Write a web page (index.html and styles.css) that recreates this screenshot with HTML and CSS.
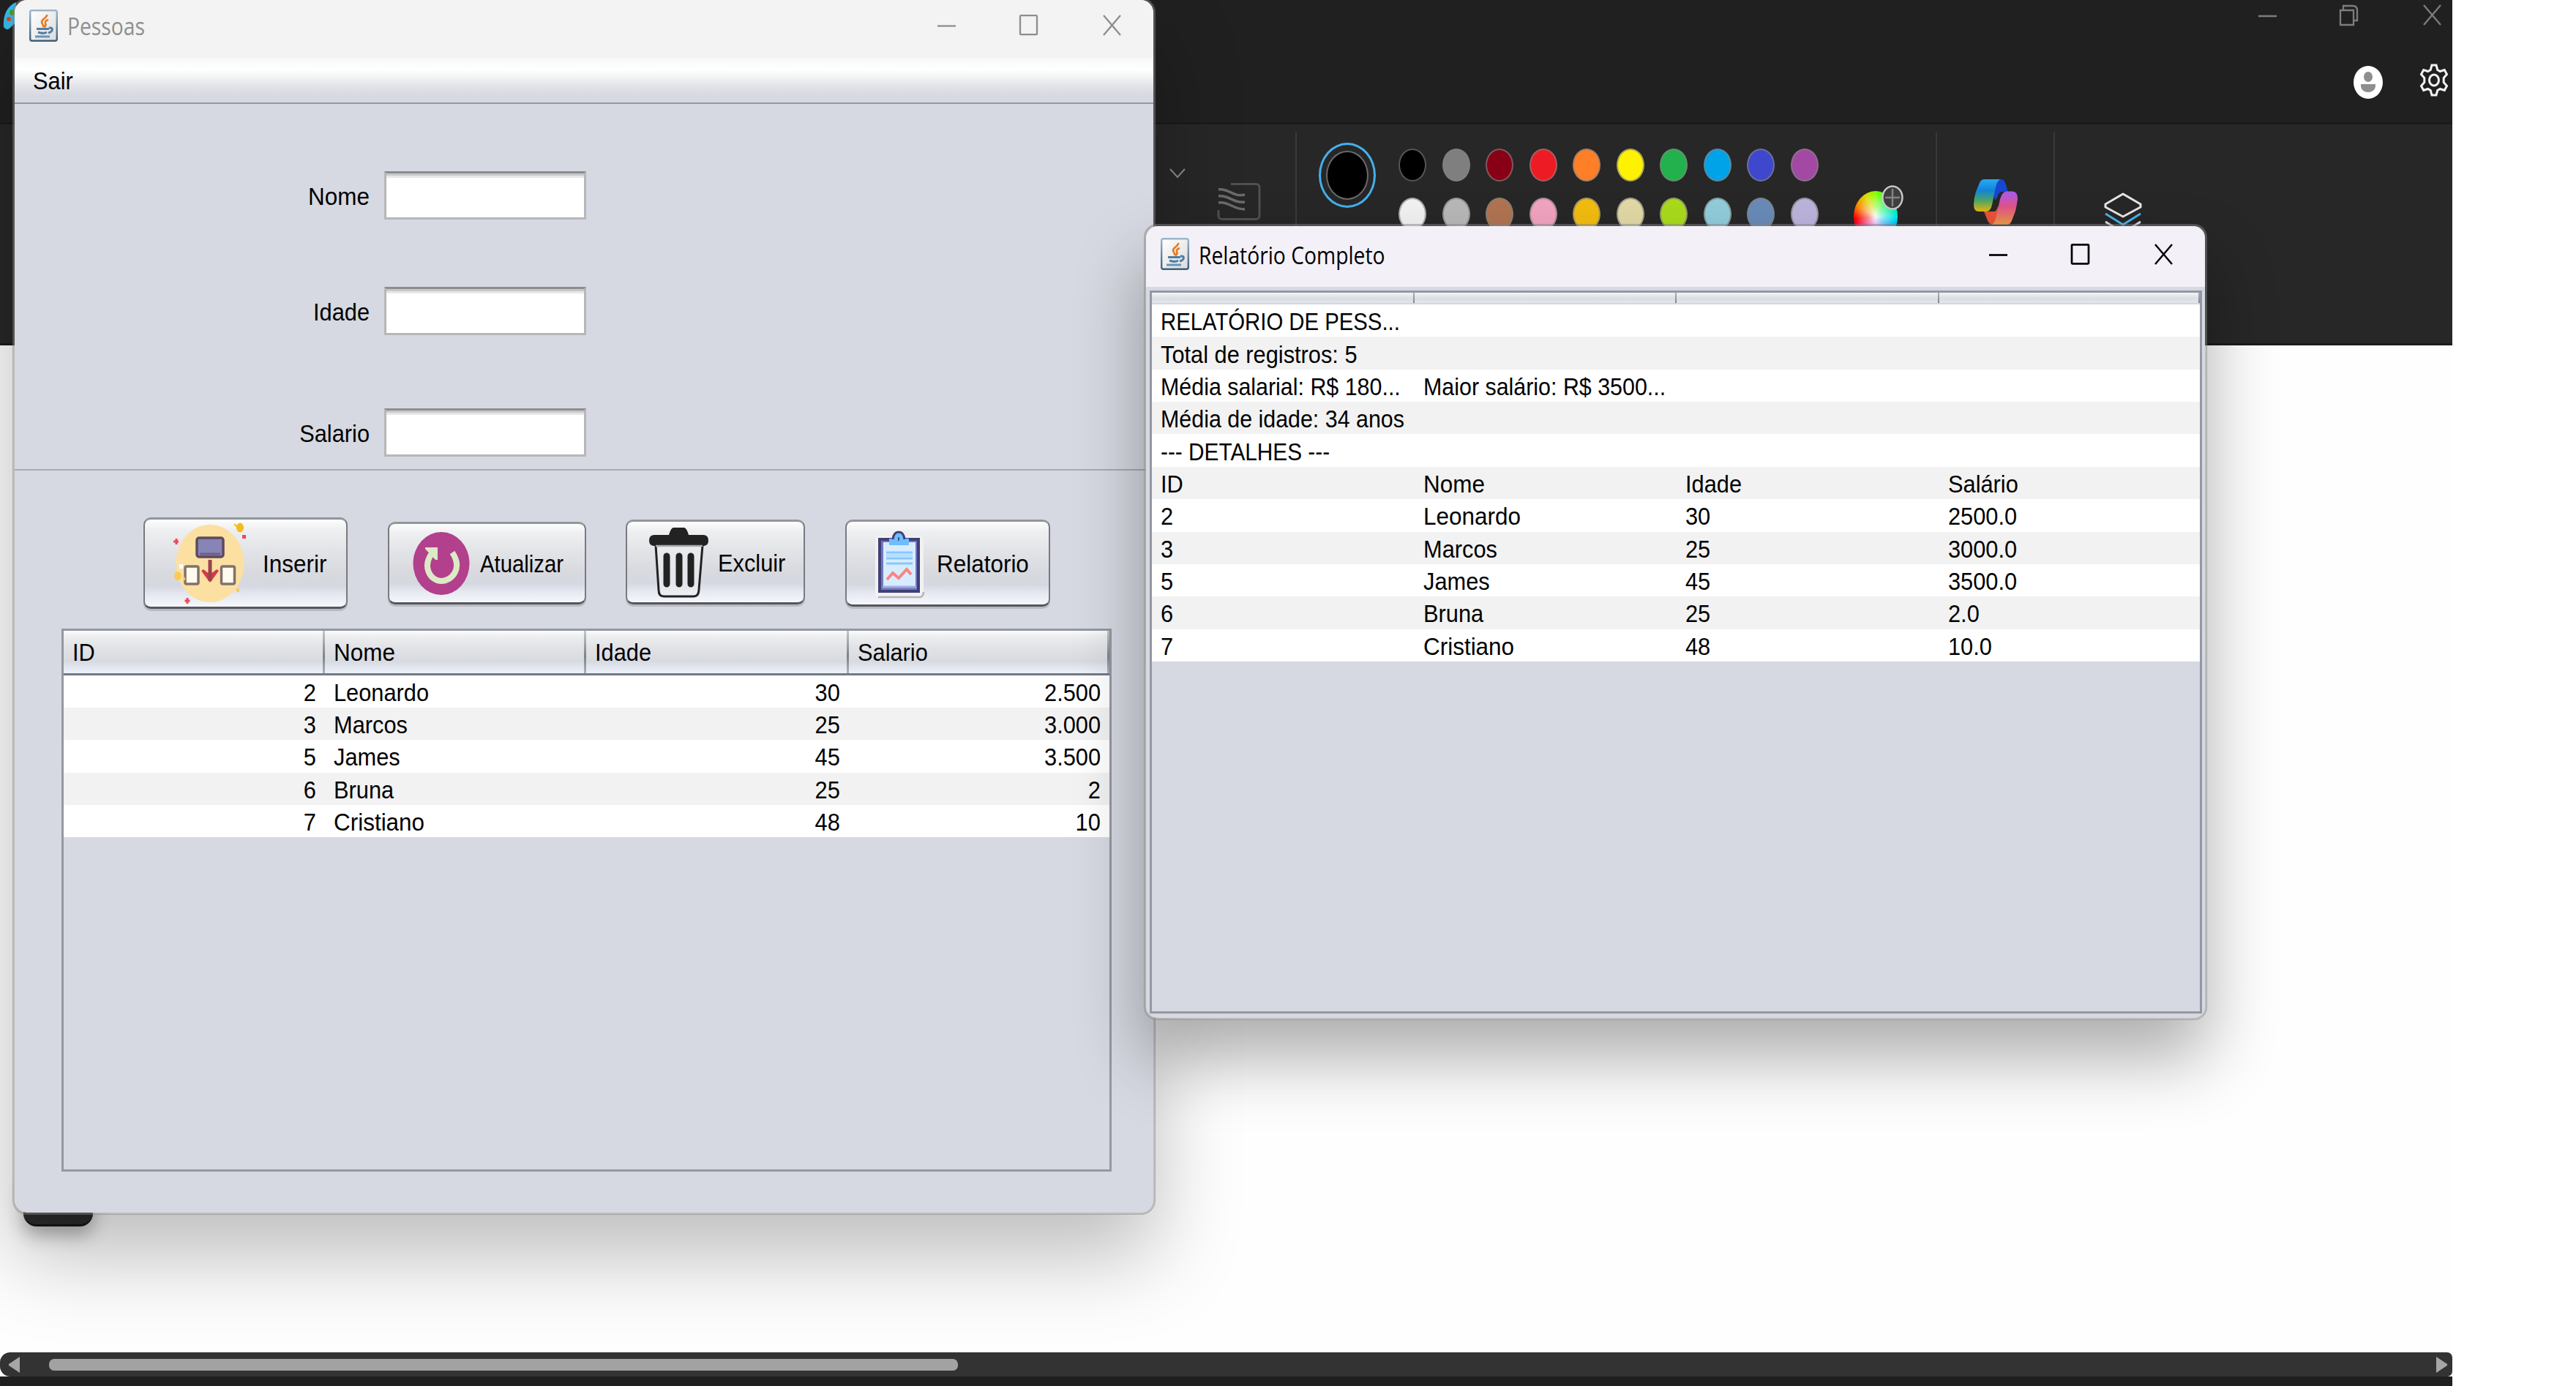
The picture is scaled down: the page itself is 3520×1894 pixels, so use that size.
FILE: index.html
```html
<!DOCTYPE html>
<html lang="pt-BR">
<head>
<meta charset="utf-8">
<title>Pessoas</title>
<link rel="stylesheet" href="styles.css">
</head>
<body>
<svg width="0" height="0" class="defs" aria-hidden="true">
  <defs>
    <linearGradient id="jb" x1="0" y1="0" x2="0" y2="1"><stop offset="0" stop-color="#9db6cb"/><stop offset="1" stop-color="#3b6078"/></linearGradient>
    <linearGradient id="jf" x1="0" y1="0" x2="1" y2="1"><stop offset="0" stop-color="#fff"/><stop offset="1" stop-color="#dcdcdc"/></linearGradient>
    <linearGradient id="cpA" x1="0" y1="0" x2="0" y2="1"><stop offset="0" stop-color="#2aa9f3"/><stop offset=".35" stop-color="#1284d8"/><stop offset=".65" stop-color="#4aa56a"/><stop offset="1" stop-color="#e8b90c"/></linearGradient>
    <linearGradient id="cpB" x1="0" y1="0" x2="0" y2="1"><stop offset="0" stop-color="#a45cf0"/><stop offset=".45" stop-color="#e2528a"/><stop offset="1" stop-color="#ee9a45"/></linearGradient>
    <symbol id="java" viewBox="0 0 39 44">
      <rect x="1.2" y="1.2" width="36.6" height="41.6" rx="2.5" fill="url(#jf)" stroke="url(#jb)" stroke-width="2.4"/>
      <path d="M24 7c1 4-7 6-7 10 0 3 3 3 2 7M26 14c-3 1-5 3-4 5 1 2 0 4-2 5" fill="none" stroke="#e8791c" stroke-width="2.6"/>
      <path d="M10 26.500h17M12 31c4 1.600 9 1.600 12 0M27 25c6-1 6 5-1 7" fill="none" stroke="#4f7ea5" stroke-width="3"/>
      <path d="M8 37h20" stroke="#6b93b5" stroke-width="3"/>
    </symbol>
  </defs>
</svg>

<main class="desktop">
  <section class="paint">
    <header class="paint-top">
      <div class="paint-controls">
        <svg width="250" height="30" viewBox="0 0 250 30" fill="none" stroke="#7d7d7d" stroke-width="2.300"><path d="M0 16h25M112 8h18v20h-18zM116 8V2h13q6 0 6 6v14h-4M226 1l23 27M249 1l-23 27"/></svg>
      </div>
      <div class="paint-account">
        <svg width="40" height="45" viewBox="0 0 40 45"><ellipse cx="20" cy="22.500" rx="20" ry="22.500" fill="#fff"/><ellipse cx="20" cy="15" rx="6" ry="7" fill="#8e8e8e"/><path d="M10 25h20v2c0 12-20 12-20 0z" fill="#8e8e8e"/></svg>
        <svg width="40" height="45" viewBox="0 0 40 45" fill="none" stroke="#f2f2f2" stroke-width="3"><path d="M17 2h6l1.800 6.500 3.500 2 6-2 3.200 6-4.300 5v6l4.300 5-3.200 6-6-2-3.500 2L23 43h-6l-1.800-6.500-3.500-2-6 2-3.200-6 4.300-5v-6l-4.300-5 3.200-6 6 2 3.500-2z"/><ellipse cx="20" cy="22.500" rx="6.500" ry="7.500"/></svg>
      </div>
    </header>
    <div class="ribbon">
      <svg class="chev" width="22" height="14" viewBox="0 0 22 14"><path d="M1 1l10 11L21 1" fill="none" stroke="#8a8a8a" stroke-width="2"/></svg>
      <svg class="texture" width="60" height="51" viewBox="0 0 60 51" fill="none" stroke="#505050" stroke-width="3"><path d="M19 1.500h34q5 0 5 5v38q0 5-5 5H7q-5 0-5-5V37"/><path d="M2 9c14-2 20 11 36 7M2 18c14-2 20 10 36 8M2 27c14-2 20 9 36 9" stroke="#6c6c6c" stroke-width="3.500"/></svg>
      <i class="vsep s1"></i>
      <div class="current"><i></i></div>
      <div class="swatches">
        <i class="c1"></i><i class="c2"></i><i class="c3"></i><i class="c4"></i><i class="c5"></i><i class="c6"></i><i class="c7"></i><i class="c8"></i><i class="c9"></i><i class="c10"></i>
        <i class="d1"></i><i class="d2"></i><i class="d3"></i><i class="d4"></i><i class="d5"></i><i class="d6"></i><i class="d7"></i><i class="d8"></i><i class="d9"></i><i class="d10"></i>
      </div>
      <div class="wheel"><svg width="30" height="34" viewBox="0 0 30 34"><ellipse cx="15" cy="17" rx="13.500" ry="15.500" fill="#3f3f3f" stroke="#c9c9c9" stroke-width="2.500"/><path d="M15 5v24M5 17h20" stroke="#858585" stroke-width="2.500"/></svg></div>
      <i class="vsep s2"></i>
      <svg class="copilot" width="60" height="62" viewBox="0 0 60 62"><path d="M24 0h13q5 0 6.500 6l3.500 11h-8q-5 0-7 8l-3 4z" fill="#1747cf"/><path d="M14 44h14q4-1 5-8l2 10-7 16h-2q-6-1-8-8z" fill="#e8543a"/><path d="M15 0h21q-4 2-6 11l-5 24q-2 9-8 9H7q-7 0-7-9 0-9 3-18L8 5q2-5 7-5z" fill="url(#cpA)"/><path d="M45 16.500h8q7 0 7 10-1 9-3 17l-5 13q-2 5.500-7 5.500H25q4-3 6-12l5-23q3-10.500 9-10.500z" fill="url(#cpB)"/></svg>
      <i class="vsep s3"></i>
      <svg class="layers" width="52" height="56" viewBox="0 0 52 56" fill="none" stroke-width="3" stroke-linejoin="round"><path d="M26 2l24 14v4L26 33 2 20v-4z" stroke="#e6e6e6"/><path d="M2 29l24 15 24-15" stroke="#4cb2e8"/><path d="M2 40l24 15 24-15" stroke="#dcdcdc"/></svg>
    </div>
    <div class="canvas"></div>
    <div class="hscroll">
      <svg width="15" height="22" viewBox="0 0 15 22"><path d="M15 0v22L0 12v-2z" fill="#a6a6a6"/></svg>
      <i class="thumb"></i>
      <svg width="16" height="22" viewBox="0 0 16 22"><path d="M0 0v22l15-10v-2z" fill="#a6a6a6"/></svg>
    </div>
    <footer class="paint-foot"></footer>
  </section>

  <svg class="paint-logo" width="40" height="42" viewBox="0 0 40 42"><path d="M22 0C8 6 4 20 5 34q4 6 9 1l8-8V0z" fill="#35b8ea"/><circle cx="17" cy="14" r="4" fill="#4c9a2a"/><circle cx="12" cy="23" r="3" fill="#d8481c"/></svg>
  <div class="tab"></div>

  <section class="win people">
    <header class="titlebar">
      <svg width="39" height="44"><use href="#java"/></svg>
      <span class="ui title">Pessoas</span>
      <svg class="controls" width="252" height="29" viewBox="0 0 252 29" fill="none" stroke="#8d8d8d" stroke-width="2.300"><path d="M0 15.500h25"/><rect x="113" y="1.200" width="23" height="26" rx="1"/><path d="M227 1l23 27M250 1l-23 27"/></svg>
    </header>
    <nav class="menubar"><span class="ui">Sair</span></nav>
    <form class="fields">
      <label><span class="ui r wide">Nome</span><input type="text"></label>
      <label><span class="ui r">Idade</span><input type="text"></label>
      <label><span class="ui r">Salario</span><input type="text"></label>
    </form>
    <div class="actions">
      <button class="b1">
        <svg width="100" height="112" viewBox="0 0 100 112"><ellipse cx="50" cy="56" rx="46.500" ry="53" fill="#fce0a2"/>
          <rect x="32" y="21" width="36" height="26" rx="3" fill="#8784b8" stroke="#5e4a5c" stroke-width="3.500"/><path d="M36 43h28" stroke="#6e5f83" stroke-width="3"/>
          <path d="M50 51v24" stroke="#9b4348" stroke-width="5"/><path d="M38 66l3-2 9 7 9-7 3 2-8 11-4 5-4-5z" fill="#d83a4b"/><path d="M50 68v12" stroke="#9b4348" stroke-width="5"/>
          <rect x="16" y="60" width="18" height="24" rx="2" fill="#fffcef" stroke="#85706c" stroke-width="3.500"/><rect x="65.500" y="60" width="18" height="24" rx="2" fill="#fffcef" stroke="#85706c" stroke-width="3.500"/>
          <ellipse cx="91" cy="7" rx="5" ry="6.500" fill="#f2bd1c"/><path d="M83 2l5 5" stroke="#f2bd1c" stroke-width="2"/><path d="M94 17h5v5h-5z" fill="#f0485a"/><path d="M4 22v8M0 26h7M19 103v8M15.500 107h7" stroke="#f0485a" stroke-width="3"/><ellipse cx="6" cy="73" rx="5" ry="6" fill="#fbcb52"/><path d="M12 79h4v-5M86 90h4v5h-4z" fill="#fbcb52"/><path d="M8 57h5v6H8z" fill="#fff"/></svg>
        <span class="ui wide">Inserir</span></button>
      <button class="b2">
        <svg width="78" height="86" viewBox="0 0 78 86"><ellipse cx="39" cy="43" rx="38.500" ry="43" fill="#b2408c"/><path d="M54 28c15 22-1 39-15 39-15 0-27-20-12-39" fill="none" stroke="#dceac6" stroke-width="8"/><path d="M17 21h17v17h-3l-5-5-9-10z" fill="#dceac6"/></svg>
        <span class="ui caps">Atualizar</span></button>
      <button class="b3">
        <svg width="81" height="97" viewBox="0 0 81 97"><path d="M27 11q3-10 6-10h15q3 0 6 10h20q7 0 7 7.500T74 26H7q-7 0-7-7.500T7 11z" fill="#222"/><path d="M9 25h64l-5 61q-.500 9-7 9H20q-7 0-7-9z" fill="#eceef0" fill-opacity=".6" stroke="#222" stroke-width="3"/><path d="M9 26h64" stroke="#aaa" stroke-width="2.500"/><path d="M24 40v38M41 40v38M57 40v38" stroke="#222" stroke-width="9" stroke-linecap="round"/></svg>
        <span class="ui">Excluir</span></button>
      <button class="b4">
        <svg width="68" height="94" viewBox="0 0 68 94"><path d="M5 8h18q3-8 9-8t9 8h18q7 0 7 6v73q0 6-6 6H7q-7 0-7-6V14q0-6 5-6z" fill="#f1f1f1"/><path d="M4 92h58q4-2 4-7" fill="none" stroke="#b4b4b4" stroke-width="2.500"/><rect x="6" y="13" width="53" height="71" fill="#7079be" stroke="#403f78" stroke-width="4"/><rect x="11" y="17" width="44" height="60" fill="#d8ecff"/><path d="M10 78h46" stroke="#a0aee0" stroke-width="3"/><path d="M19 12h6q0-9 7-9t7 9h7v9H19z" fill="#6fbcff"/><path d="M24 13q1-10 8-10t8 10" fill="none" stroke="#403f78" stroke-width="3"/><path d="M32 10v5" stroke="#275f9a" stroke-width="2"/><path d="M15 31h36M15 39h36M15 46h36" stroke="#86c8ff" stroke-width="3"/><path d="M15 35h36" stroke="#b0dcff" stroke-width="3"/><path d="M16 68l8-9 8 7 11-12 6 7" fill="none" stroke="#fa8484" stroke-width="4"/></svg>
        <span class="ui wide">Relatorio</span></button>
    </div>
    <div class="grid main-grid">
      <div class="row head"><span><b class="ui">ID</b></span><span><b class="ui wide">Nome</b></span><span><b class="ui">Idade</b></span><span><b class="ui">Salario</b></span></div>
      <div class="row"><span class="n"><b class="ui r">2</b></span><span><b class="ui">Leonardo</b></span><span class="n"><b class="ui r">30</b></span><span class="n"><b class="ui r">2.500</b></span></div>
      <div class="row"><span class="n"><b class="ui r">3</b></span><span><b class="ui">Marcos</b></span><span class="n"><b class="ui r">25</b></span><span class="n"><b class="ui r">3.000</b></span></div>
      <div class="row"><span class="n"><b class="ui r">5</b></span><span><b class="ui">James</b></span><span class="n"><b class="ui r">45</b></span><span class="n"><b class="ui r">3.500</b></span></div>
      <div class="row"><span class="n"><b class="ui r">6</b></span><span><b class="ui">Bruna</b></span><span class="n"><b class="ui r">25</b></span><span class="n"><b class="ui r">2</b></span></div>
      <div class="row"><span class="n"><b class="ui r">7</b></span><span><b class="ui wide">Cristiano</b></span><span class="n"><b class="ui r">48</b></span><span class="n"><b class="ui r">10</b></span></div>
    </div>
  </section>

  <section class="win report">
    <header class="titlebar">
      <svg width="39" height="44"><use href="#java"/></svg>
      <span class="ui title">Relatório Completo</span>
      <svg class="controls" width="252" height="29" viewBox="0 0 252 29" fill="none" stroke="#000" stroke-width="2.700"><path d="M0 15.500h25"/><rect x="113" y="1.300" width="23" height="26" rx="1"/><path d="M227 1l23 27M250 1l-23 27" stroke-width="2.500"/></svg>
    </header>
    <div class="grid report-grid">
      <div class="row head"><span></span><span></span><span></span><span></span></div>
      <div class="row"><span><b class="ui caps">RELATÓRIO DE PESS...</b></span></div>
      <div class="row"><span><b class="ui">Total de registros: 5</b></span></div>
      <div class="row"><span><b class="ui long">Média salarial: R$ 180...</b></span><span><b class="ui long">Maior salário: R$ 3500...</b></span></div>
      <div class="row"><span><b class="ui long">Média de idade: 34 anos</b></span></div>
      <div class="row"><span><b class="ui dashes">--- DETALHES ---</b></span></div>
      <div class="row"><span><b class="ui">ID</b></span><span><b class="ui wide">Nome</b></span><span><b class="ui">Idade</b></span><span><b class="ui">Salário</b></span></div>
      <div class="row"><span><b class="ui">2</b></span><span><b class="ui wide">Leonardo</b></span><span><b class="ui">30</b></span><span><b class="ui">2500.0</b></span></div>
      <div class="row"><span><b class="ui">3</b></span><span><b class="ui">Marcos</b></span><span><b class="ui">25</b></span><span><b class="ui">3000.0</b></span></div>
      <div class="row"><span><b class="ui">5</b></span><span><b class="ui">James</b></span><span><b class="ui">45</b></span><span><b class="ui">3500.0</b></span></div>
      <div class="row"><span><b class="ui">6</b></span><span><b class="ui">Bruna</b></span><span><b class="ui">25</b></span><span><b class="ui">2.0</b></span></div>
      <div class="row"><span><b class="ui">7</b></span><span><b class="ui wide">Cristiano</b></span><span><b class="ui">48</b></span><span><b class="ui">10.0</b></span></div>
    </div>
  </section>
</main>
</body>
</html>
```
FILE: styles.css
```css
* { box-sizing: border-box; }
html, body { margin: 0; width: 3520px; height: 1894px; overflow: hidden; background: #fff; }
body { font: 34px/40px "Liberation Sans", Arial, sans-serif; color: #000; }
svg { display: block; flex: none; }
.defs { position: absolute; }
i { display: block; flex: none; }
b { font-weight: normal; }

/* Condensed interface lettering */
.ui { display: inline-block; white-space: pre; transform: scaleX(.905); transform-origin: left; }
.ui.wide { transform: scaleX(.925); }
.ui.long { transform: scaleX(.894); }
.ui.caps { transform: scaleX(.862); }
.ui.dashes { transform: scaleX(.876); }
.ui.r { transform-origin: right; }

.desktop { position: relative; width: 3520px; height: 1894px; overflow: hidden; }

/* Paint application behind the two windows */
.paint { width: 3351px; height: 1894px; display: flex; flex-direction: column; }
.paint-top { height: 170px; background: #202020; border-bottom: 3px solid #1b1b1b; padding: 6px 5px 0 0; display: flex; flex-direction: column; align-items: flex-end; }
.paint-controls { height: 81px; padding-right: 10px; }
.paint-account { display: flex; gap: 50px; }
.paint-account svg:first-child { margin-top: 3px; }
.ribbon { height: 302px; background: #272727; border-bottom: 3px solid #1b1b1b; padding-left: 1598px; display: flex; align-items: flex-start; }
.chev { margin-top: 60px; }
.texture { margin: 80px 0 0 43px; }
.vsep { width: 2px; height: 240px; margin-top: 11px; background: #3a3a3a; }
.s1 { margin-left: 47px; }
.current { width: 78px; height: 89px; margin: 25px 0 0 30px; border: 3px solid #45b0ea; border-radius: 50%; padding: 8px 7px; }
.current i { width: 58px; height: 67px; background: #000; border: 2px solid #6a6a6a; border-radius: 50%; }
.swatches { margin: 33px 0 0 31px; display: grid; grid-template-columns: repeat(10, 38px); gap: 22px 21.550px; }
.swatches i { height: 45px; border-radius: 50%; border: 2px solid rgba(130,130,130,.65); }
.c1 { background: #000; } .c2 { background: #7f7f7f; } .c3 { background: #880015; } .c4 { background: #ed1c24; } .c5 { background: #ff7f27; }
.c6 { background: #fff200; } .c7 { background: #22b14c; } .c8 { background: #00a2e8; } .c9 { background: #3f48cc; } .c10 { background: #a349a4; }
.d1 { background: #f2f2f2; } .d2 { background: #b8b8b8; } .d3 { background: #b07452; } .d4 { background: #f2a3c0; } .d5 { background: #f2bd10; }
.d6 { background: #e3d9a6; } .d7 { background: #aadb1d; } .d8 { background: #91cddc; } .d9 { background: #6a8bb8; } .d10 { background: #bdb4dc; }
.wheel { width: 60px; height: 70px; margin: 91px 0 0 48px; border-radius: 50%; background: radial-gradient(ellipse at 50% 50%, #fff 0, rgba(255,255,255,.6) 22%, rgba(255,255,255,0) 65%), conic-gradient(#8f0 0deg, #0f5 40deg, #0ee 90deg, #09f 130deg, #b6f 180deg, #f06 230deg, #f00 265deg, #f80 300deg, #dd0 335deg, #8f0 360deg); }
.wheel svg { margin: -8px 0 0 38px; }
.s2 { margin-left: 52px; }
.copilot { margin: 75px 0 0 50px; }
.s3 { margin-left: 49px; }
.layers { margin: 93px 0 0 67px; }
.canvas { flex: 1; background: #fefefe; }
.hscroll { height: 33px; background: #333; border-radius: 14px 7px 7px 14px; display: flex; align-items: center; padding: 0 6px 0 12px; }
.thumb { width: 1242px; height: 16px; margin: 0 auto 0 40px; border-radius: 7px; background: #a2a2a2; }
.paint-foot { height: 13px; background: #1f1f1f; }
.paint-logo { position: absolute; left: 0; top: 3px; }
.tab { position: absolute; left: 32px; top: 1600px; width: 95px; height: 76px; background: #2b2b2b; border-bottom: 3px solid #151515; border-radius: 18px; box-shadow: 0 12px 24px rgba(0,0,0,.3); z-index: 1; }

/* Windows */
.win { position: absolute; z-index: 2; display: flex; flex-direction: column; background: #d6d9e1; background-clip: padding-box; border: 3px solid rgba(125,125,125,.5); border-radius: 20px; }
.people { left: 17px; top: -3px; width: 1562px; height: 1663px; box-shadow: 0 56px 115px rgba(0,0,0,.26); }
.report { left: 1563px; top: 306px; width: 1453px; height: 1088px; border-radius: 18px; box-shadow: 0 52px 95px rgba(0,0,0,.32); }
.titlebar { flex: none; display: flex; align-items: center; border-radius: 17px 17px 0 0; }
.title { font: 33px/40px "Open Sans", "Noto Sans", sans-serif; transform: scaleX(.856); margin-left: 13px; padding-top: 3px; }
.controls { margin-left: auto; }
.people .titlebar { height: 79px; background: #f3f3f3; padding: 0 43px 10px 20px; color: #8f8f8f; }
.report .titlebar { height: 83px; background: #f3f0f8; padding: 0 43px 7px 20px; }
.menubar { flex: none; height: 63px; padding: 11px 0 0 25px; border-bottom: 2px solid #9499a5; background: linear-gradient(#f6f8f8 0, #fff 16px, #f2f3f5 27px, #e2e4e8 38px, #d6d9e1 52px); }

.fields { flex: none; height: 501px; padding-top: 92px; border-bottom: 2px solid #a6aab4; }
.fields label { display: flex; align-items: center; height: 66px; margin-bottom: 92px; }
.fields label:nth-child(2) { margin-bottom: 100px; }
.fields span { width: 300px; margin-left: 185px; text-align: right; padding-top: 2px; }
.fields input { width: 276px; height: 66px; margin: 0 0 0 20px; padding: 0; background: linear-gradient(#c9c9c9 3px, #e7e7e7 3px 6px, #fff 6px); border: 3px solid #b7b7b7; border-top-color: #8c8d90; }

.actions { flex: none; height: 216px; padding: 64px 0 0 176px; display: flex; gap: 54.500px; align-items: flex-start; }
.actions button { font: inherit; color: #000; margin: 0; padding: 0; display: flex; align-items: center; border: 3px solid; border-width: 3px 2.500px; border-color: #91979c #777b80 #55575c #777b80; border-radius: 10px; background: linear-gradient(#fdfdfd 0, #eeeff1 12%, #e3e4e7 35%, #d8dadf 60%, #d5d8e0 76%, #e6e9f1 87%, #f5f7fc 100%); box-shadow: 0 3px 0 rgba(0,0,0,.14); }
.b1 { width: 279px; height: 125px; }
.actions .b2 { width: 271px; height: 113px; margin-top: 6px; }
.actions .b3 { width: 245px; height: 116px; margin-top: 3px; }
.actions .b4 { width: 280px; height: 119px; margin-top: 3px; }
.b1 svg { margin: 0 22px 0 39px; }
.b2 svg { margin: 0 14px 0 32px; }
.b3 svg { margin: 0 13px 0 30px; }
.b4 svg { margin: 3px 16px 0 39px; }
.actions .ui { padding-top: 1px; }

/* Tables */
.grid { border: 3px solid #9398a4; }
.row { display: grid; background: #fff; align-items: center; }
.row:nth-child(odd) { background: #f2f2f2; }
.row span { padding: 2px 12px 0; white-space: nowrap; }
.n { text-align: right; }
.main-grid { margin: 0 0 0 64px; width: 1435px; height: 742px; }
.main-grid .row { height: 44.200px; grid-template-columns: 357px 357px 359px 356px; }
.row.head { background: linear-gradient(#fdfdfd 0, #eeeff1 12%, #e2e3e6 38%, #d7dae1 72%, #e4e8f1 88%, #edf1fa 100%); align-items: stretch; }
.main-grid .row.head { height: 61px; border-bottom: 3px solid #737a82; }
.row.head span { border-right: 3px solid; border-image: linear-gradient(#c4c7cc, #7d8289 60%, #b0b4bd) 1; }
.main-grid .head span { padding-top: 9px; }
.report-grid { margin: 5px 0 0 5px; width: 1438px; height: 988px; }
.report-grid .row { height: 44.360px; grid-template-columns: 359px 358px 359px 356px; }
.report-grid .row.head { height: 16px; border-bottom: 2px solid #d3d6de; background: linear-gradient(#f5f5f6 0, #dcdde1 55%, #e3e6ee 100%); }
.report-grid .head span { padding: 0; border-image: linear-gradient(#b0b3b8, #7d8289) 1; border-right-width: 2.500px; }
```
